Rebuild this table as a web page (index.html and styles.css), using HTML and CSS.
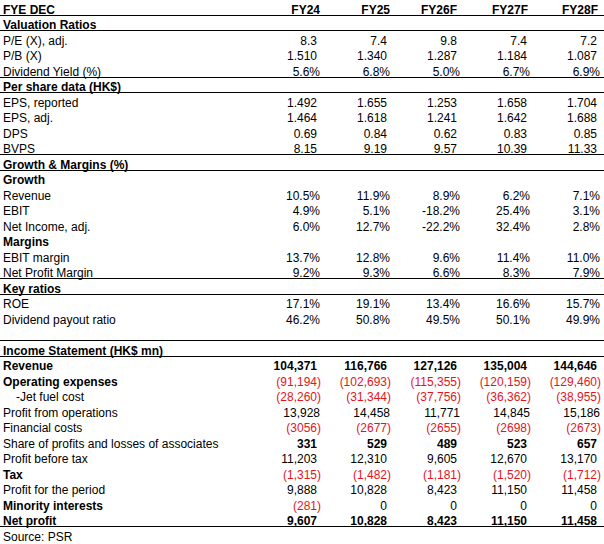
FILE: index.html
```html
<!DOCTYPE html>
<html lang="en">
<head>
<meta charset="utf-8">
<title>Financial summary</title>
<link rel="stylesheet" href="styles.css">
</head>
<body>
<div class="sheet">
  <div class="row hdr b line"><span class="lbl">FYE DEC</span><span>FY24</span><span>FY25</span><span>FY26F</span><span>FY27F</span><span>FY28F</span></div>
  <div class="row b line"><span class="lbl">Valuation Ratios</span></div>
  <div class="row num"><span class="lbl">P/E (X), adj.</span><span>8.3</span><span>7.4</span><span>9.8</span><span>7.4</span><span>7.2</span></div>
  <div class="row num"><span class="lbl">P/B (X)</span><span>1.510</span><span>1.340</span><span>1.287</span><span>1.184</span><span>1.087</span></div>
  <div class="row pct line"><span class="lbl">Dividend Yield (%)</span><span>5.6%</span><span>6.8%</span><span>5.0%</span><span>6.7%</span><span>6.9%</span></div>
  <div class="row b line"><span class="lbl">Per share data (HK$)</span></div>
  <div class="row num"><span class="lbl">EPS, reported</span><span>1.492</span><span>1.655</span><span>1.253</span><span>1.658</span><span>1.704</span></div>
  <div class="row num"><span class="lbl">EPS, adj.</span><span>1.464</span><span>1.618</span><span>1.241</span><span>1.642</span><span>1.688</span></div>
  <div class="row num"><span class="lbl">DPS</span><span>0.69</span><span>0.84</span><span>0.62</span><span>0.83</span><span>0.85</span></div>
  <div class="row num line"><span class="lbl">BVPS</span><span>8.15</span><span>9.19</span><span>9.57</span><span>10.39</span><span>11.33</span></div>
  <div class="row b line"><span class="lbl">Growth &amp; Margins (%)</span></div>
  <div class="row b"><span class="lbl">Growth</span></div>
  <div class="row pct"><span class="lbl">Revenue</span><span>10.5%</span><span>11.9%</span><span>8.9%</span><span>6.2%</span><span>7.1%</span></div>
  <div class="row pct"><span class="lbl">EBIT</span><span>4.9%</span><span>5.1%</span><span>-18.2%</span><span>25.4%</span><span>3.1%</span></div>
  <div class="row pct"><span class="lbl">Net Income, adj.</span><span>6.0%</span><span>12.7%</span><span>-22.2%</span><span>32.4%</span><span>2.8%</span></div>
  <div class="row b"><span class="lbl">Margins</span></div>
  <div class="row pct"><span class="lbl">EBIT margin</span><span>13.7%</span><span>12.8%</span><span>9.6%</span><span>11.4%</span><span>11.0%</span></div>
  <div class="row pct line"><span class="lbl">Net Profit Margin</span><span>9.2%</span><span>9.3%</span><span>6.6%</span><span>8.3%</span><span>7.9%</span></div>
  <div class="row b line"><span class="lbl">Key ratios</span></div>
  <div class="row pct"><span class="lbl">ROE</span><span>17.1%</span><span>19.1%</span><span>13.4%</span><span>16.6%</span><span>15.7%</span></div>
  <div class="row pct"><span class="lbl">Dividend payout ratio</span><span>46.2%</span><span>50.8%</span><span>49.5%</span><span>50.1%</span><span>49.9%</span></div>
  <div class="row line"><span class="lbl"></span></div>
  <div class="row b line"><span class="lbl">Income Statement (HK$ mn)</span></div>
  <div class="row num b"><span class="lbl">Revenue</span><span>104,371</span><span>116,766</span><span>127,126</span><span>135,004</span><span>144,646</span></div>
  <div class="row neg"><span class="lbl b">Operating expenses</span><span>(91,194)</span><span>(102,693)</span><span>(115,355)</span><span>(120,159)</span><span>(129,460)</span></div>
  <div class="row neg"><span class="lbl sub">-Jet fuel cost</span><span>(28,260)</span><span>(31,344)</span><span>(37,756)</span><span>(36,362)</span><span>(38,955)</span></div>
  <div class="row pct"><span class="lbl">Profit from operations</span><span>13,928</span><span>14,458</span><span>11,771</span><span>14,845</span><span>15,186</span></div>
  <div class="row neg"><span class="lbl">Financial costs</span><span>(3056)</span><span>(2677)</span><span>(2655)</span><span>(2698)</span><span>(2673)</span></div>
  <div class="row num b"><span class="lbl nb">Share of profits and losses of associates</span><span>331</span><span>529</span><span>489</span><span>523</span><span>657</span></div>
  <div class="row num"><span class="lbl">Profit before tax</span><span>11,203</span><span>12,310</span><span>9,605</span><span>12,670</span><span>13,170</span></div>
  <div class="row neg"><span class="lbl b">Tax</span><span>(1,315)</span><span>(1,482)</span><span>(1,181)</span><span>(1,520)</span><span>(1,712)</span></div>
  <div class="row num"><span class="lbl">Profit for the period</span><span>9,888</span><span>10,828</span><span>8,423</span><span>11,150</span><span>11,458</span></div>
  <div class="row num"><span class="lbl b">Minority interests</span><span class="red par">(281)</span><span>0</span><span>0</span><span>0</span><span>0</span></div>
  <div class="row num b line"><span class="lbl">Net profit</span><span>9,607</span><span>10,828</span><span>8,423</span><span>11,150</span><span>11,458</span></div>
  <div class="row"><span class="lbl">Source: PSR</span></div>
</div>
</body>
</html>
```

FILE: styles.css
```css
html, body {
  margin: 0;
  padding: 0;
  background: #ffffff;
}

body {
  font-family: "Liberation Sans", Arial, sans-serif;
  font-size: 12px;
  line-height: 13px;
  color: #000000;
}

.sheet {
  width: 604px;
}

.row {
  display: grid;
  grid-template-columns: 1fr repeat(5, 70px);
  padding-right: 3px;
  height: 15.5px;
  box-sizing: border-box;
}

.row > span {
  padding-top: 3.5px;
  white-space: nowrap;
  text-align: right;
  padding-right: 4px;
}

.row > .lbl {
  text-align: left;
  padding-left: 3px;
  padding-right: 0;
}

.row > .sub {
  padding-left: 16px;
}

.line {
  border-bottom: 1px solid #000000;
}

.b {
  font-weight: bold;
}

.row.b > .nb {
  font-weight: normal;
}

.pct > span {
  padding-right: 1px;
}

.neg > span {
  color: #e2141c;
  padding-right: 0;
}

.row > .par {
  padding-right: 0;
}

.row > .red {
  color: #e2141c;
}

.neg > .lbl {
  color: #000000;
}

.hdr > span:nth-child(2),
.hdr > span:nth-child(3) {
  padding-right: 1px;
}

.hdr > span:nth-child(4) {
  padding-right: 4px;
}

.hdr > span:nth-child(5),
.hdr > span:nth-child(6) {
  padding-right: 3px;
}
```
